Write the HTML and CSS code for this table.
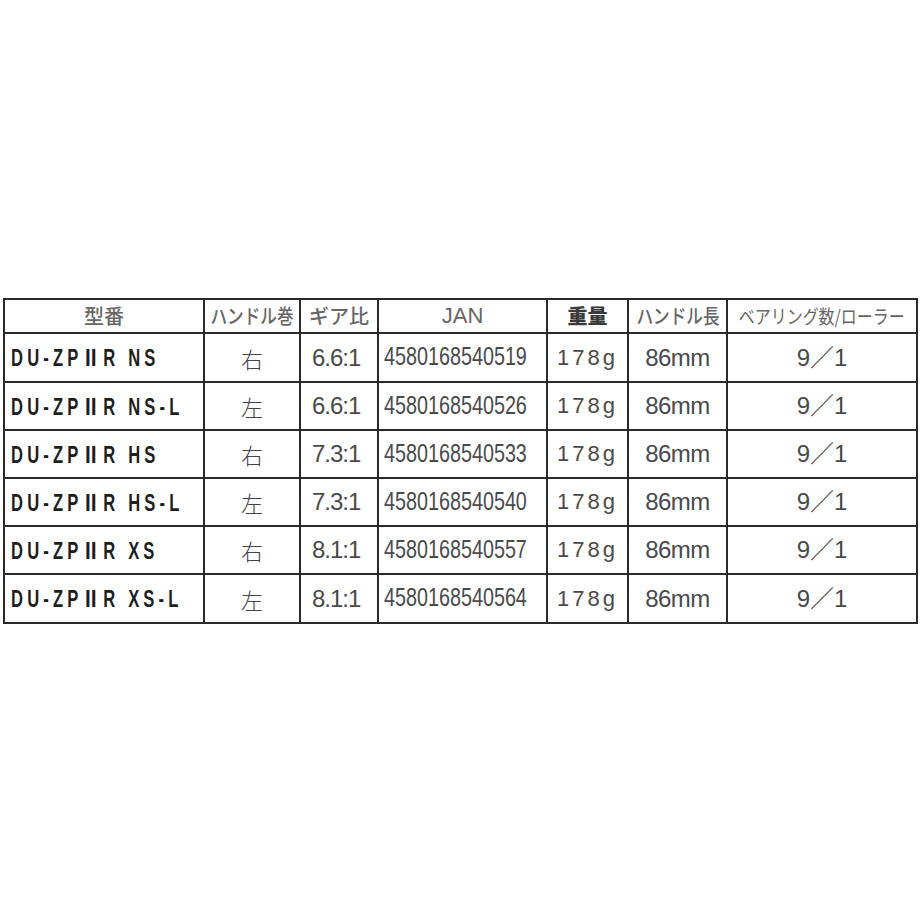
FILE: index.html
```html
<!DOCTYPE html>
<html lang="ja">
<head>
<meta charset="utf-8">
<title>DU-ZPⅡR スペック</title>
<link rel="stylesheet" href="styles.css">
</head>
<body>
<div class="page">
  <table class="spec">
    <colgroup>
      <col class="c-model">
      <col class="c-handle">
      <col class="c-gear">
      <col class="c-jan">
      <col class="c-weight">
      <col class="c-hlen">
      <col class="c-bear">
    </colgroup>
    <thead>
      <tr>
        <th><span class="h">型番</span></th>
        <th><span class="h h-narrow">ハンドル巻</span></th>
        <th><span class="h">ギア比</span></th>
        <th><span class="h h-latin">JAN</span></th>
        <th><span class="h h-dark">重量</span></th>
        <th><span class="h h-narrow">ハンドル長</span></th>
        <th><span class="h h-narrow2">ベアリング数/ローラー</span></th>
      </tr>
    </thead>
    <tbody>
      <tr class="row-first">
        <td class="model"><span>DU-ZP<b class="roman">Ⅱ</b>R NS</span></td>
        <td class="side">右</td>
        <td class="gear">6.6:1</td>
        <td class="jan"><span>4580168540519</span></td>
        <td class="weight">178g</td>
        <td class="hlen">86mm</td>
        <td class="bear">9／1</td>
      </tr>
      <tr>
        <td class="model"><span>DU-ZP<b class="roman">Ⅱ</b>R NS-L</span></td>
        <td class="side">左</td>
        <td class="gear">6.6:1</td>
        <td class="jan"><span>4580168540526</span></td>
        <td class="weight">178g</td>
        <td class="hlen">86mm</td>
        <td class="bear">9／1</td>
      </tr>
      <tr>
        <td class="model"><span>DU-ZP<b class="roman">Ⅱ</b>R HS</span></td>
        <td class="side">右</td>
        <td class="gear">7.3:1</td>
        <td class="jan"><span>4580168540533</span></td>
        <td class="weight">178g</td>
        <td class="hlen">86mm</td>
        <td class="bear">9／1</td>
      </tr>
      <tr>
        <td class="model"><span>DU-ZP<b class="roman">Ⅱ</b>R HS-L</span></td>
        <td class="side">左</td>
        <td class="gear">7.3:1</td>
        <td class="jan"><span>4580168540540</span></td>
        <td class="weight">178g</td>
        <td class="hlen">86mm</td>
        <td class="bear">9／1</td>
      </tr>
      <tr>
        <td class="model"><span>DU-ZP<b class="roman">Ⅱ</b>R XS</span></td>
        <td class="side">右</td>
        <td class="gear">8.1:1</td>
        <td class="jan"><span>4580168540557</span></td>
        <td class="weight">178g</td>
        <td class="hlen">86mm</td>
        <td class="bear">9／1</td>
      </tr>
      <tr class="row-last">
        <td class="model"><span>DU-ZP<b class="roman">Ⅱ</b>R XS-L</span></td>
        <td class="side">左</td>
        <td class="gear">8.1:1</td>
        <td class="jan"><span>4580168540564</span></td>
        <td class="weight">178g</td>
        <td class="hlen">86mm</td>
        <td class="bear">9／1</td>
      </tr>
    </tbody>
  </table>
</div>
</body>
</html>
```
FILE: styles.css
```css
html, body {
  margin: 0;
  padding: 0;
  background: #ffffff;
}

.page {
  padding: 298px 0 0 3px;
}

.spec {
  border-collapse: collapse;
  table-layout: fixed;
  width: 914px;
  font-family: "Liberation Sans", "Noto Sans CJK JP", sans-serif;
  color: #444;
}

.c-model { width: 200px; }
.c-handle { width: 96px; }
.c-gear { width: 78px; }
.c-jan { width: 169px; }
.c-weight { width: 81px; }
.c-hlen { width: 99px; }
.c-bear { width: 190px; }

.spec th,
.spec td {
  border: 2px solid #2a2a2a;
  padding: 0;
  white-space: nowrap;
  overflow: visible;
  line-height: 1;
}

.spec thead tr {
  height: 34px;
}

.spec tbody tr {
  height: 48px;
}

.spec tbody .row-first,
.spec tbody .row-last {
  height: 49px;
}

.spec th {
  font-family: "Noto Sans CJK JP", sans-serif;
  font-weight: 500;
  font-size: 20px;
  color: #666;
  text-align: center;
}

.h {
  display: inline-block;
}

.h-narrow {
  transform: scaleX(0.83);
  margin: 0 -8px;
}

.h-narrow2 {
  font-size: 19px;
  transform: scaleX(0.84);
  margin: 0 -20px;
  font-weight: 400;
}

.h-latin {
  font-family: "Liberation Sans", sans-serif;
  font-weight: 400;
  font-size: 22px;
}

.h-dark {
  color: #3a3a3a;
  font-weight: 900;
}

.spec .model {
  padding-left: 6px;
  text-align: left;
}

.spec .model span {
  display: inline-block;
  font-weight: 700;
  font-size: 23px;
  letter-spacing: 5.8px;
  color: #1e1e1e;
  transform: scaleX(0.72);
  transform-origin: left center;
}

.spec .model .roman {
  font-family: "Noto Sans CJK JP", sans-serif;
  font-weight: 900;
}

.spec .side {
  text-align: center;
  font-family: "Noto Sans CJK JP", sans-serif;
  font-weight: 300;
  font-size: 22px;
  color: #444;
}

.spec .gear {
  padding-left: 11px;
  font-size: 24px;
  letter-spacing: -1px;
  color: #4a4a4a;
}

.spec .jan {
  padding-left: 5px;
  padding-bottom: 3px;
}

.spec .jan span {
  display: inline-block;
  font-size: 26px;
  color: #4a4a4a;
  transform: scaleX(0.76);
  transform-origin: left center;
}

.spec .weight {
  text-align: center;
  font-size: 22px;
  letter-spacing: 3px;
  color: #4a4a4a;
}

.spec .hlen {
  text-align: center;
  font-size: 24px;
  letter-spacing: -0.5px;
  color: #4a4a4a;
}

.spec .bear {
  text-align: center;
  font-size: 24px;
  color: #4a4a4a;
}
```
